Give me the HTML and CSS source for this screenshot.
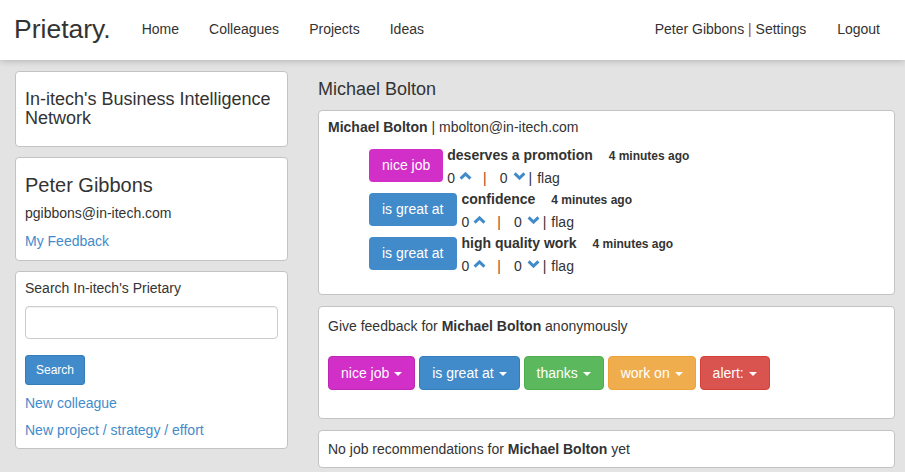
FILE: index.html
```html
<!DOCTYPE html>
<html>
<head>
<meta charset="utf-8">
<link rel="stylesheet" href="styles.css">
</head>
<body>
<nav class="navbar">
  <a class="brand" href="#">Prietary.</a>
  <ul class="nav">
    <li><a href="#">Home</a></li>
    <li><a href="#">Colleagues</a></li>
    <li><a href="#">Projects</a></li>
    <li><a href="#">Ideas</a></li>
  </ul>
  <ul class="nav nav-right">
    <li><a href="#">Peter Gibbons <span class="sep">|</span> Settings</a></li>
    <li><a href="#">Logout</a></li>
  </ul>
</nav>

<main class="main">
  <aside class="side">
    <section class="card card-org">
      <h4 class="org-title">In-itech's Business Intelligence Network</h4>
    </section>
    <section class="card card-user">
      <h3 class="user-name">Peter Gibbons</h3>
      <div class="user-email">pgibbons@in-itech.com</div>
      <a class="link user-link" href="#">My Feedback</a>
    </section>
    <section class="card card-search">
      <div class="search-label">Search In-itech's Prietary</div>
      <input class="search-input" type="text">
      <button class="btn-search">Search</button>
      <a class="link side-link" href="#">New colleague</a>
      <a class="link side-link" href="#">New project / strategy / effort</a>
    </section>
  </aside>

  <div class="content">
    <h4 class="page-title">Michael Bolton</h4>

    <section class="card card-feed">
      <div class="feed-head"><b>Michael Bolton</b> | mbolton@in-itech.com</div>
      <ul class="feed-list">
        <li class="feed-item">
          <span class="tag tag-pink">nice job</span>
          <div class="feed-body">
            <div class="feed-title">deserves a promotion <span class="time">4 minutes ago</span></div>
            <div class="votes">
              <span>0</span>
              <svg class="chev up" width="13" height="8" viewBox="0 0 13 8"><polyline points="1.6,6.6 6.5,1.9 11.4,6.6" fill="none" stroke="#428bca" stroke-width="3"/></svg>
              <span class="vsep">|</span>
              <span>0</span>
              <svg class="chev down" width="13" height="8" viewBox="0 0 13 8"><polyline points="1.6,1.4 6.5,6.1 11.4,1.4" fill="none" stroke="#428bca" stroke-width="3"/></svg>
              <span class="fsep">|</span>
              <span>flag</span>
            </div>
          </div>
        </li>
        <li class="feed-item">
          <span class="tag tag-blue">is great at</span>
          <div class="feed-body">
            <div class="feed-title">confidence <span class="time">4 minutes ago</span></div>
            <div class="votes">
              <span>0</span>
              <svg class="chev up" width="13" height="8" viewBox="0 0 13 8"><polyline points="1.6,6.6 6.5,1.9 11.4,6.6" fill="none" stroke="#428bca" stroke-width="3"/></svg>
              <span class="vsep">|</span>
              <span>0</span>
              <svg class="chev down" width="13" height="8" viewBox="0 0 13 8"><polyline points="1.6,1.4 6.5,6.1 11.4,1.4" fill="none" stroke="#428bca" stroke-width="3"/></svg>
              <span class="fsep">|</span>
              <span>flag</span>
            </div>
          </div>
        </li>
        <li class="feed-item">
          <span class="tag tag-blue">is great at</span>
          <div class="feed-body">
            <div class="feed-title">high quality work <span class="time">4 minutes ago</span></div>
            <div class="votes">
              <span>0</span>
              <svg class="chev up" width="13" height="8" viewBox="0 0 13 8"><polyline points="1.6,6.6 6.5,1.9 11.4,6.6" fill="none" stroke="#428bca" stroke-width="3"/></svg>
              <span class="vsep">|</span>
              <span>0</span>
              <svg class="chev down" width="13" height="8" viewBox="0 0 13 8"><polyline points="1.6,1.4 6.5,6.1 11.4,1.4" fill="none" stroke="#428bca" stroke-width="3"/></svg>
              <span class="fsep">|</span>
              <span>flag</span>
            </div>
          </div>
        </li>
      </ul>
    </section>

    <section class="card card-give">
      <div class="give-text">Give feedback for <b>Michael Bolton</b> anonymously</div>
      <div class="btn-row">
        <button class="btn btn-pink">nice job <span class="caret"></span></button>
        <button class="btn btn-blue">is great at <span class="caret"></span></button>
        <button class="btn btn-green">thanks <span class="caret"></span></button>
        <button class="btn btn-orange">work on <span class="caret"></span></button>
        <button class="btn btn-red">alert: <span class="caret"></span></button>
      </div>
    </section>

    <section class="card card-jobs">
      No job recommendations for <b>Michael Bolton</b> yet
    </section>
  </div>
</main>
</body>
</html>
```

FILE: styles.css
```css
* { box-sizing: border-box; }

html, body {
  margin: 0;
  padding: 0;
  background: #e3e3e3;
  color: #333;
  font-family: "Liberation Sans", Arial, sans-serif;
  font-size: 14px;
  line-height: 20px;
  overflow: hidden;
}

a { text-decoration: none; color: inherit; }

.navbar {
  height: 60px;
  background: #fff;
  display: flex;
  align-items: center;
  padding: 0 10px 3px 14px;
  box-shadow: 0 1px 7px rgba(0, 0, 0, 0.22);
  position: relative;
}

.brand {
  font-size: 26.5px;
  line-height: 30px;
  color: #333;
  margin-right: 16px;
}

.nav {
  list-style: none;
  margin: 0;
  padding: 0;
  display: flex;
}

.nav a {
  display: block;
  padding: 0 15px;
  color: #333;
}

.nav-right { margin-left: auto; }
.nav-right li:first-child a { padding-right: 16px; }

.sep { color: #a3461f; }

.main {
  display: grid;
  grid-template-columns: 273px 1fr;
  column-gap: 30px;
  padding: 11px 10px 0 15px;
}

.side {
  display: flex;
  flex-direction: column;
  gap: 10px;
}

.card {
  background: #fff;
  border: 1px solid #c3c3c3;
  border-radius: 4px;
}

.card-org { padding: 18px 9px 18px; height: 76px; }

.org-title {
  margin: 0;
  font-size: 18px;
  font-weight: normal;
  line-height: 19px;
}

.card-user {
  padding: 16px 9px 9px;
  display: flex;
  flex-direction: column;
}

.user-name {
  margin: 0;
  font-size: 20px;
  font-weight: normal;
  line-height: 22px;
}

.user-email { margin-top: 7px; }

.user-link { margin-top: 8px; }

.link { color: #428bca; }

.card-search {
  padding: 6px 9px 4px;
  display: flex;
  flex-direction: column;
  align-items: flex-start;
  height: 178px;
}

.search-input {
  margin-top: 8px;
  width: 100%;
  height: 33px;
  border: 1px solid #ccc;
  border-radius: 4px;
  box-shadow: inset 0 1px 1px rgba(0, 0, 0, 0.06);
}

.btn-search {
  margin-top: 16px;
  height: 30px;
  padding: 0 10px;
  background: #428bca;
  border: 1px solid #357ebd;
  border-radius: 3px;
  color: #fff;
  font-family: "Liberation Sans", Arial, sans-serif;
  font-size: 12px;
}

.side-link { margin-top: 9px; line-height: 19px; }
.side-link + .side-link { margin-top: 8px; }

.content { display: flex; flex-direction: column; }

.page-title {
  margin: 8px 0 10px;
  font-size: 18px;
  font-weight: normal;
  line-height: 21px;
}

.card-feed { padding: 6px 9px 13px; }

.feed-list {
  list-style: none;
  margin: 12px 0 0;
  padding: 0 0 0 41px;
}

.feed-item {
  display: flex;
  align-items: flex-start;
  gap: 4px;
  height: 44px;
}

.tag {
  display: inline-block;
  color: #fff;
  padding: 6px 14px 6px 13px;
  line-height: 21px;
  border-radius: 4px;
}

.tag-pink { background: #d22ec8; padding-right: 13px; }
.tag-blue { background: #428bca; }

.feed-title {
  font-weight: bold;
  line-height: 14px;
  margin-top: -1px;
}

.time {
  font-size: 12px;
  margin-left: 12px;
}

.votes {
  margin-top: 4px;
  line-height: 22px;
  display: flex;
  align-items: center;
}

.chev {
  flex: 0 0 13px;
  width: 13px;
  height: 8px;
  margin: -5px 0 0 4px;
}
.chev.down { margin-left: 5px; margin-top: -4px; }

.vsep { color: #a3461f; margin: 0 13px 0 11px; }
.fsep { margin: 0 5px 0 3px; }

.card-give {
  margin-top: 11px;
  padding: 9px 9px 28px;
}

.btn-row {
  margin-top: 20px;
  display: flex;
  gap: 4px;
}

.btn {
  height: 34px;
  padding: 0 12px;
  border: 1px solid transparent;
  border-radius: 4px;
  color: #fff;
  font-family: "Liberation Sans", Arial, sans-serif;
  font-size: 14px;
}

.caret {
  display: inline-block;
  width: 0;
  height: 0;
  margin-left: 1px;
  vertical-align: middle;
  border-top: 4px solid #fff;
  border-left: 4px solid transparent;
  border-right: 4px solid transparent;
}

.btn-pink { background: #d22ec8; border-color: #bd27b4; }
.btn-blue { background: #428bca; border-color: #357ebd; }
.btn-green { background: #5cb85c; border-color: #4cae4c; }
.btn-orange { background: #f0ad4e; border-color: #eea236; }
.btn-red { background: #d9534f; border-color: #d43f3a; }

.card-jobs {
  margin-top: 11px;
  padding: 8px 9px 8px;
}
```
